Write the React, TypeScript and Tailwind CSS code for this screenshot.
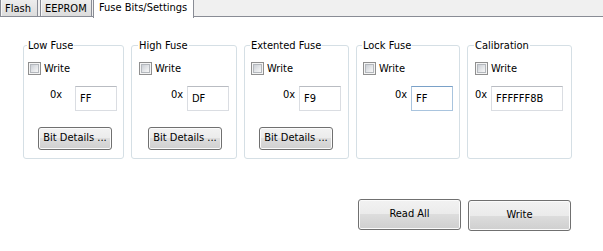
import React from "react";

interface Fuse {
  name: string;
  value: string;
  box: string;
  pl: string;
  legend: string;
  oxPl: string;
  oxW: string;
  input: string;
  btn?: string;
  focused?: boolean;
}

const fuses: Fuse[] = [
  { name: "Low Fuse", value: "FF", box: "w-[101px]", pl: "pl-[4px]", legend: "left-[3px]", oxPl: "pl-[26px]", oxW: "w-[25px]", input: "w-[42px]", btn: "ml-[14px]" },
  { name: "High Fuse", value: "DF", box: "w-[106px]", pl: "pl-[7px]", legend: "left-[6px]", oxPl: "pl-[39px]", oxW: "w-[16px]", input: "w-[42px]", btn: "ml-[16px]" },
  { name: "Extented Fuse", value: "F9", box: "w-[105px]", pl: "pl-[6px]", legend: "left-[5px]", oxPl: "pl-[38px]", oxW: "w-[16px]", input: "w-[42px]", btn: "ml-[14px]" },
  { name: "Lock Fuse", value: "FF", box: "w-[104px]", pl: "pl-[6px]", legend: "left-[5px]", oxPl: "pl-[38px]", oxW: "w-[16px]", input: "w-[42px]", focused: true },
  { name: "Calibration", value: "FFFFFF8B", box: "w-[105px]", pl: "pl-[7px]", legend: "left-[6px]", oxPl: "pl-[7px]", oxW: "w-[16px]", input: "w-[72px]" },
];

const btnSkin =
  "border border-[#707070] rounded-[3px] shadow-[inset_0_0_0_1px_#fbfbfb] bg-[linear-gradient(to_bottom,#f2f2f2_0%,#ebebeb_50%,#dddddd_50%,#cfcfcf_100%)] flex items-center justify-center text-black";

const Checkbox: React.FC = () => (
  <div className="w-[13px] h-[13px] border border-[#8f8f8f] bg-[#f4f4f4] p-[1px]">
    <div className="w-full h-full border border-[#b4b8bd] bg-[linear-gradient(135deg,#cbcfd5_0%,#e4e6e9_55%,#f7f7f7_100%)]" />
  </div>
);

const FuseBox: React.FC<{ fuse: Fuse }> = ({ fuse }) => (
  <div className={`relative h-[114px] ${fuse.box} border border-[#d5dfe5] rounded-[3px] pt-[16px] flex flex-col`}>
    <span className={`absolute -top-[7px] ${fuse.legend} bg-white px-[1px] leading-[13px]`}>
      {fuse.name}
    </span>

    {/* Write checkbox */}
    <div className={`flex items-center gap-[3px] h-[13px] ${fuse.pl}`}>
      <Checkbox />
      <span className="leading-[13px]">Write</span>
    </div>

    {/* value */}
    <div className={`flex mt-[11px] ${fuse.oxPl}`}>
      <span className={`${fuse.oxW} pt-[2px] leading-[13px]`}>0x</span>
      <div
        className={`h-[25px] ${fuse.input} border pl-[4px] flex items-center leading-[13px] ${
          fuse.focused
            ? "border-[#a9c4de] border-t-[#7aa1c8]"
            : "border-[#dadde2] border-t-[#b9bcc2]"
        }`}
      >
        {fuse.value}
      </div>
    </div>

    {fuse.btn && (
      <div className={`mt-[16px] ${fuse.btn}`}>
        <button className={`w-[74px] h-[23px] ${btnSkin}`}>Bit Details ...</button>
      </div>
    )}
  </div>
);

const App: React.FC = () => {
  return (
    <div className="w-[603px] h-[251px] bg-white overflow-hidden text-[11px] text-black font-['DejaVu_Sans_Condensed','Liberation_Sans',Arial,sans-serif]">
      {/* Tabs */}
      <div className="flex h-[17px] bg-[#f0f0f0] border-b border-[#898c95]">
        <div className="h-[16px] w-[38px] border-x border-[#898c95] bg-[linear-gradient(to_bottom,#ededed,#dcdcdc)] shadow-[inset_1px_0_0_#f7f7f7] pl-[4px] pt-[2px] leading-[13px] whitespace-nowrap overflow-hidden">
          Flash
        </div>
        <div className="h-[16px] w-[52px] ml-[2px] border-x border-[#898c95] bg-[linear-gradient(to_bottom,#ededed,#dcdcdc)] shadow-[inset_1px_0_0_#f7f7f7] pl-[4px] pt-[2px] leading-[13px] whitespace-nowrap overflow-hidden">
          EEPROM
        </div>
        <div className="relative z-10 h-[18px] w-[101px] ml-[1px] border-x border-[#898c95] bg-white pl-[5px] pt-[1px] leading-[13px] whitespace-nowrap">
          Fuse Bits/Settings
        </div>
      </div>

      {/* Fuse groups */}
      <div className="flex gap-[7px] pl-[23px] mt-[28px]">
        {fuses.map((f) => (
          <FuseBox key={f.name} fuse={f} />
        ))}
      </div>

      {/* Actions */}
      <div className="flex items-start gap-[7px] pl-[358px] mt-[40px]">
        <button className={`w-[103px] h-[31px] ${btnSkin}`}>Read All</button>
        <button className={`w-[103px] h-[31px] mt-[1px] ${btnSkin}`}>Write</button>
      </div>
    </div>
  );
};

export default App;
